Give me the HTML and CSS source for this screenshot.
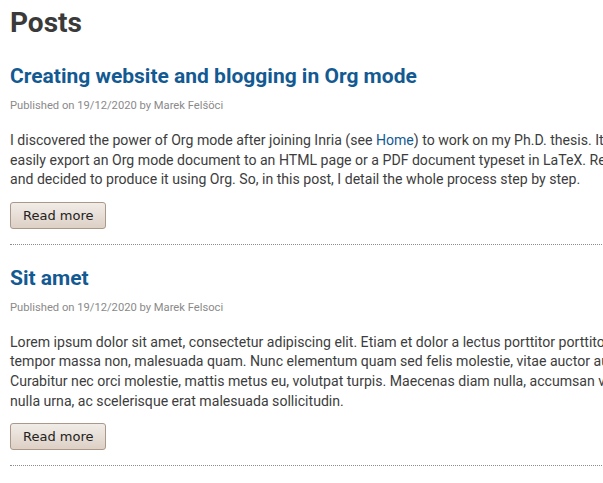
FILE: index.html
```html
<!DOCTYPE html>
<html lang="en">
<head>
<meta charset="utf-8">
<title>Posts</title>
<link rel="stylesheet" href="styles.css">
</head>
<body>
<main class="content">
  <h1 class="page-title">Posts</h1>
  <article class="post">
    <h2 class="post-title">Creating website and blogging in Org mode</h2>
    <p class="post-meta">Published on 19/12/2020 by Marek Felšöci</p>
    <p class="post-summary">I discovered the power of Org mode after joining Inria (see <a href="#">Home</a>) to work on my Ph.D. thesis. It lets me<br>easily export an Org mode document to an HTML page or a PDF document typeset in LaTeX. Recently, I needed a website<br>and decided to produce it using Org. So, in this post, I detail the whole process step by step.</p>
    <button class="read-more" type="button">Read more</button>
  </article>
  <article class="post">
    <h2 class="post-title">Sit amet</h2>
    <p class="post-meta">Published on 19/12/2020 by Marek Felsoci</p>
    <p class="post-summary">Lorem ipsum dolor sit amet, consectetur adipiscing elit. Etiam et dolor a lectus porttitor porttitor. Sed<br>tempor massa non, malesuada quam. Nunc elementum quam sed felis molestie, vitae auctor augue porta.<br>Curabitur nec orci molestie, mattis metus eu, volutpat turpis. Maecenas diam nulla, accumsan vel<br>nulla urna, ac scelerisque erat malesuada sollicitudin.</p>
    <button class="read-more" type="button">Read more</button>
  </article>
</main>
</body>
</html>
```
FILE: styles.css
```css
html {
  overflow: hidden;
}
body {
  margin: 0;
  padding: 0 10px;
  background: #ffffff;
  font-family: Roboto, "Liberation Sans", sans-serif;
  color: #3d3d3d;
}
.content {
  width: 900px;
}
.page-title {
  margin: 6px 0 3px;
  font-size: 28px;
  line-height: 34px;
  font-weight: 700;
  color: #3a3a3a;
}
.post {
  border-bottom: 1px dotted #8c8c8c;
  padding: 20px 0 15px;
  width: 592px;
}
.post-title {
  margin: 0;
  font-size: 21px;
  line-height: 26px;
  font-weight: 700;
  color: #135a92;
}
.post-meta {
  margin: 10px 0 0;
  font-size: 11.2px;
  line-height: 14px;
  color: #8a8a8a;
}
.post-summary {
  margin: 18px 0 0;
  font-size: 14.1px;
  line-height: 19.6px;
  color: #3d3d3d;
  white-space: nowrap;
}
.post-summary a {
  color: #135a92;
  text-decoration: none;
}
.read-more {
  display: block;
  margin-top: 12px;
  padding: 0 12px;
  height: 27px;
  font-family: "DejaVu Sans", sans-serif;
  font-size: 13px;
  color: #222;
  background: linear-gradient(#f1ece8, #ddd0c5);
  border: 1px solid #ab9888;
  border-radius: 3px;
}
```
